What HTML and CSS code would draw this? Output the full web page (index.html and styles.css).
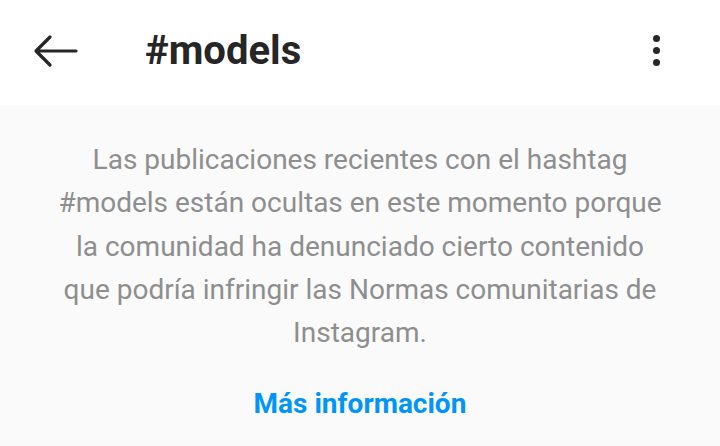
FILE: index.html
```html
<!DOCTYPE html>
<html lang="es">
<head>
<meta charset="utf-8">
<link rel="stylesheet" href="styles.css">
</head>
<body>
<div class="app">
  <header class="bar">
    <button class="icon-btn back" aria-label="Atrás">
      <svg width="48" height="40" viewBox="0 0 48 40">
        <path d="M45 19H6M19 5L5 19l14 14" fill="none" stroke="#262626" stroke-width="3.2" stroke-linecap="round" stroke-linejoin="round"/>
      </svg>
    </button>
    <h1 class="title">#models</h1>
    <button class="icon-btn more" aria-label="Más opciones">
      <span class="dot"></span><span class="dot"></span><span class="dot"></span>
    </button>
  </header>
  <main class="content">
    <p class="notice">Las publicaciones recientes con el hashtag #models están ocultas en este momento porque la comunidad ha denunciado cierto contenido que podría infringir las Normas comunitarias de Instagram.</p>
    <a class="link" href="#">Más información</a>
  </main>
</div>
</body>
</html>
```
FILE: styles.css
```css
html, body {
  margin: 0;
  padding: 0;
  height: 100%;
}
body {
  font-family: Roboto, "Noto Sans", sans-serif;
  background: #fafafa;
}
.app {
  display: flex;
  flex-direction: column;
  height: 446px;
}
.bar {
  height: 105px;
  background: #ffffff;
  display: flex;
  align-items: center;
  box-sizing: border-box;
  padding: 0 59px 0 31px;
}
.icon-btn {
  border: 0;
  background: none;
  padding: 0;
  cursor: pointer;
}
.back {
  width: 48px;
  height: 40px;
  display: flex;
  margin-top: -2px;
}
.title {
  margin: -4px 0 0 66px;
  font-size: 40px;
  font-weight: 700;
  color: #262626;
  flex: 1;
}
.more {
  width: 10px;
  display: flex;
  flex-direction: column;
  align-items: center;
  gap: 5px;
  margin-top: -4px;
}
.dot {
  width: 7px;
  height: 7px;
  border-radius: 50%;
  background: #262626;
}
.content {
  flex: 1;
  display: flex;
  flex-direction: column;
  align-items: center;
  padding: 0 50px;
}
.notice {
  max-width: 612px;
  margin: 33px 0 0;
  text-align: center;
  color: #8e8e8e;
  font-size: 28px;
  line-height: 43.3px;
}
.link {
  margin-top: 33px;
  color: #0095f6;
  font-weight: 700;
  font-size: 28px;
  text-decoration: none;
}
```
